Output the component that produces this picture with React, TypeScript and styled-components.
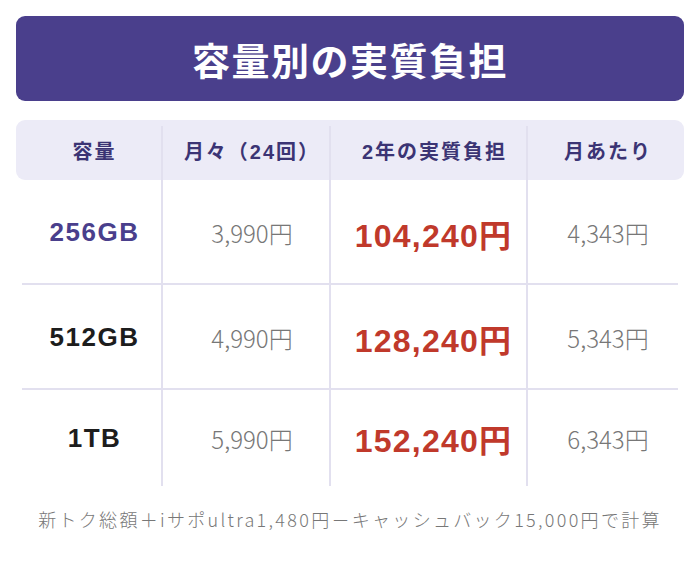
import React from "react";
import styled, { createGlobalStyle } from "styled-components";

const GlobalStyle = createGlobalStyle`
  html, body { margin: 0; padding: 0; background: #ffffff; }
  body { font-family: "Noto Sans CJK JP", "Noto Sans", sans-serif; }
`;

const latinBold = `"Liberation Sans", "Noto Sans CJK JP", sans-serif`;

const Page = styled.div`
  width: 700px;
  box-sizing: border-box;
  padding: 16px 16px 0;
`;

const TitleBar = styled.h1`
  margin: 0;
  height: 85px;
  display: flex;
  align-items: center;
  justify-content: center;
  background: #4a3f8c;
  border-radius: 9px;
  color: #ffffff;
  font-size: 38px;
  font-weight: 700;
  letter-spacing: 1.5px;
  line-height: 1;
`;

const Table = styled.div`
  margin-top: 19px;
  display: flex;
  flex-direction: column;
`;

const cols = "145px 168px 197px 158px";

const HeaderRow = styled.div`
  display: grid;
  grid-template-columns: ${cols};
  height: 60px;
  background: #ecebf7;
  border-radius: 9px;
`;

const HeaderCell = styled.div<{ $divider?: boolean; $shift?: number }>`
  margin-top: 6px;
  padding: 0 0 6px ${(p) => p.$shift ?? 10}px;
  display: flex;
  align-items: center;
  justify-content: center;
  border-left: ${(p) => (p.$divider ? "2px solid #e2e0ef" : "none")};
  color: #3b3474;
  font-family: ${latinBold};
  font-size: 20px;
  font-weight: 700;
  letter-spacing: 2px;
`;

const BodyRow = styled.div<{ $last?: boolean }>`
  display: grid;
  grid-template-columns: ${cols};
  height: ${(p) => (p.$last ? 96 : 105)}px;
  background: ${(p) =>
    p.$last
      ? "none"
      : "linear-gradient(#e2e0ef, #e2e0ef) no-repeat 6px 100% / calc(100% - 12px) 2px"};
`;

const Cell = styled.div<{ $divider?: boolean; $shift?: number }>`
  padding-left: ${(p) => p.$shift ?? 10}px;
  display: flex;
  align-items: center;
  justify-content: center;
  border-left: ${(p) => (p.$divider ? "2px solid #e2e0ef" : "none")};
`;

const Capacity = styled.span<{ $accent?: boolean }>`
  font-family: ${latinBold};
  font-size: 26px;
  font-weight: 700;
  letter-spacing: 1.5px;
  color: ${(p) => (p.$accent ? "#4a3f8c" : "#1d1d1d")};
`;

const Price = styled.span`
  font-size: 24px;
  font-weight: 300;
  color: #777777;
`;

const Total = styled.span`
  font-family: ${latinBold};
  font-size: 32px;
  font-weight: 700;
  letter-spacing: 1.2px;
  color: #c0392b;
`;

const Footer = styled.p`
  margin: 20px 0 0;
  text-align: center;
  font-size: 18px;
  line-height: 26px;
  font-weight: 300;
  letter-spacing: 2.3px;
  color: #777777;
`;

const rows = [
  { cap: "256GB", accent: true, monthly: "3,990円", total: "104,240円", per: "4,343円" },
  { cap: "512GB", accent: false, monthly: "4,990円", total: "128,240円", per: "5,343円" },
  { cap: "1TB", accent: false, monthly: "5,990円", total: "152,240円", per: "6,343円" },
];

export default function App() {
  return (
    <Page>
      <GlobalStyle />
      <TitleBar>容量別の実質負担</TitleBar>
      <Table>
        <HeaderRow>
          <HeaderCell $shift={12}>容量</HeaderCell>
          <HeaderCell $divider $shift={12}>月々（24回）</HeaderCell>
          <HeaderCell $divider $shift={12}>2年の実質負担</HeaderCell>
          <HeaderCell $divider $shift={4}>月あたり</HeaderCell>
        </HeaderRow>
        {rows.map((r, i) => (
          <BodyRow key={r.cap} $last={i === rows.length - 1}>
            <Cell $shift={12}>
              <Capacity $accent={r.accent}>{r.cap}</Capacity>
            </Cell>
            <Cell $divider $shift={12}>
              <Price>{r.monthly}</Price>
            </Cell>
            <Cell $divider $shift={10}>
              <Total>{r.total}</Total>
            </Cell>
            <Cell $divider $shift={4}>
              <Price>{r.per}</Price>
            </Cell>
          </BodyRow>
        ))}
      </Table>
      <Footer>新トク総額＋iサポultra1,480円－キャッシュバック15,000円で計算</Footer>
    </Page>
  );
}
